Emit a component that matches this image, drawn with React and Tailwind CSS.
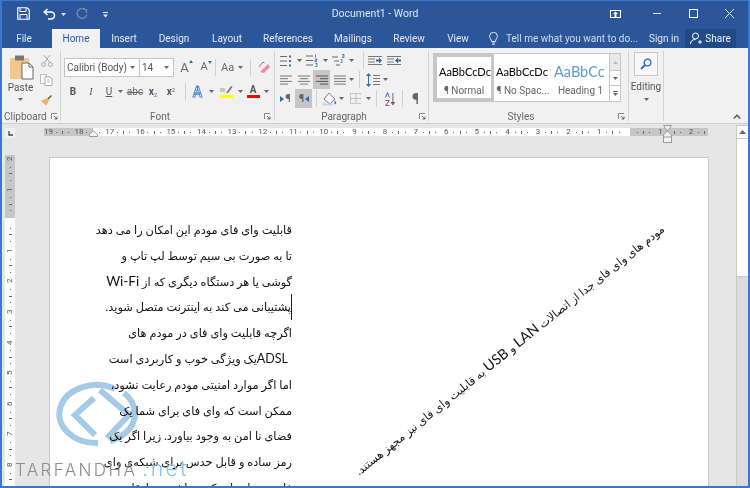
import React from 'react';

const Caret = ({ c = '#666' }) => (
  <svg width="5" height="3" viewBox="0 0 5 3" className="shrink-0"><path d="M0 0h5L2.5 3z" fill={c} /></svg>
);

const Slot = ({ w, children, sel }) => (
  <div style={{ width: w }} className={`h-full shrink-0 flex items-center justify-center ${sel ? 'bg-[#c6c6c6]' : ''}`}>{children}</div>
);

const VDiv = ({ h = 'h-[17px]' }) => <div className={`w-px ${h} bg-[#d0d0d0] shrink-0`} />;

const Launcher = () => (
  <svg width="7" height="7" viewBox="0 0 7 7" className="shrink-0">
    <path d="M0.5 6V0.5H6" stroke="#888" fill="none" />
    <path d="M3 3l3 3M6 3.5V6H3.5" stroke="#666" fill="none" />
  </svg>
);

const Lines = ({ kind }) => {
  const rows = {
    left: [[0, 12], [0, 8], [0, 12], [0, 8]],
    center: [[0, 12], [2, 10], [0, 12], [2, 10]],
    right: [[0, 12], [4, 12], [0, 12], [4, 12]],
    just: [[0, 12], [0, 12], [0, 12], [0, 12]],
  }[kind];
  return (
    <svg width="12" height="10" viewBox="0 0 12 10">
      {rows.map((r, i) => <path key={i} d={`M${r[0]} ${1 + i * 2.7}H${r[1]}`} stroke={kind === 'right' ? '#555' : '#777'} />)}
    </svg>
  );
};

const Bullets = () => (
  <svg width="12" height="12" viewBox="0 0 12 12">
    <path d="M0 1.5h7M0 6h7M0 10.5h7" stroke="#666" />
    <path d="M9 0.5h2v2H9zM9 5h2v2H9zM9 9.5h2v2H9z" fill="#2b6cb0" />
  </svg>
);
const Numbers = () => (
  <svg width="12" height="13" viewBox="0 0 12 13">
    <path d="M0 2h7M0 6.5h7M0 11h7" stroke="#666" />
    <path d="M9.5 0.5v3M9 5h2v1.2H9v1.4h2M9 9.6h2v3H9" stroke="#2b6cb0" fill="none" strokeWidth=".8" />
  </svg>
);
const Multi = () => (
  <svg width="13" height="13" viewBox="0 0 13 13">
    <path d="M0 3h6M2 7h5M4 11h4" stroke="#666" />
    <path d="M10 0.5h2v1.5h-1.5M12 2v1.5h-2M8.5 5.5h1.5v3H8.5" stroke="#2b6cb0" fill="none" strokeWidth=".8" />
  </svg>
);
const Indent = ({ rev }) => (
  <svg width="14" height="9" viewBox="0 0 14 9">
    <path d="M0 .5h14M0 8.5h14M0 3h7M0 6h7" stroke="#777" />
    <path d={rev ? 'M8 4.5L11 1.5V3.5H14V5.5H11V7.5z' : 'M14 4.5L11 1.5V3.5H8V5.5H11V7.5z'} fill="#2b6cb0" />
  </svg>
);

const Pages = ['19', '18', '17', '16', '15', '14', '13', '12', '11', '10', '9', '8', '7', '6', '5', '4', '3', '2', '1', '', '1', '2'];
const VNums = ['2', '1', '', '1', '2', '3', '4', '5', '6', '7', '8'];

const Lat = ({ s, children }) => <span className={s}>{children}</span>;

const TEXT_LINES = [
  'قابلیت وای فای مودم این امکان را می دهد',
  'تا به صورت بی سیم توسط لپ تاپ و',
  <>گوشی یا هر دستگاه دیگری که از <Lat s="text-[13.5px]">Wi-Fi</Lat></>,
  'پشتیبانی می کند به اینترنت متصل شوید.',
  'اگرچه قابلیت وای فای در مودم های',
  <><Lat s="text-[12.5px]">ADSL</Lat>یک ویژگی خوب و کاربردی است</>,
  'اما اگر موارد امنیتی مودم رعایت نشود،',
  'ممکن است که وای فای برای شما یک',
  'فضای نا امن به وجود بیاورد. زیرا اگر یک',
  'رمز ساده و قابل حدس برای شبکه‌ی وای',
  'فای خود انتخاب کرده باشید، سارقان',
];

export default function App() {
  return (
    <div className="relative w-[750px] h-[488px] overflow-hidden flex flex-col bg-[#e6e6e6] border-x-2 border-b-2 border-t border-[#3a78d0] font-['Roboto','Noto_Sans',sans-serif] text-[#444]">
      {/* Title bar */}
      <div className="h-[28px] shrink-0 bg-[#2b579a] flex items-center text-[#e3e9f3] relative">
        <div className="w-[15px]" />
        <svg width="13" height="13" viewBox="0 0 13 13" className="shrink-0 mt-[-3px]">
          <path d="M.75.75H10l2.25 2.25v9.25H.75z" stroke="#fff" strokeWidth="1.2" fill="none" />
          <path d="M3 1v3.5h6V1M3 12V7.5h7V12" stroke="#fff" fill="none" />
        </svg>
        <div className="w-[13px]" />
        <svg width="13" height="12" viewBox="0 0 13 12" className="shrink-0 mt-[-3px]">
          <path d="M4.5 1L1 4l3.5 3M1.5 4H8a3.5 3.5 0 0 1 0 7H5" stroke="#fff" strokeWidth="1.4" fill="none" />
        </svg>
        <div className="w-[5px]" />
        <div className="mt-[-2px]"><Caret c="#dfe6f2" /></div>
        <div className="w-[10px]" />
        <svg width="12" height="12" viewBox="0 0 12 12" className="shrink-0 mt-[-3px]">
          <path d="M7 1.5h3.5V5M10 2.2A5 5 0 1 0 11 6.5" stroke="#6d8dbd" strokeWidth="1.2" fill="none" />
        </svg>
        <div className="w-[15px]" />
        <svg width="5" height="6" viewBox="0 0 5 6" className="shrink-0 mt-[-1px]">
          <path d="M0 .5h5" stroke="#e3e9f3" /><path d="M0 2.5h5L2.5 5.5z" fill="#e3e9f3" />
        </svg>
        <div className="absolute left-0 right-0 top-[6px] text-center text-[10.5px] leading-[14px] text-[#dfe6f2]">Document1 - Word</div>
        <div className="flex-1" />
        <svg width="11" height="8" viewBox="0 0 11 8" className="shrink-0 mt-[-3px]">
          <rect x=".5" y=".5" width="10" height="7" fill="none" stroke="#fff" /><path d="M5.5 1.5L8 4H6.5v3h-2V4H3z" fill="#fff" />
        </svg>
        <div className="w-[32px]" />
        <div className="w-[8px] h-px bg-[#e3e9f3] mt-[-3px]" />
        <div className="w-[28px]" />
        <div className="w-[9px] h-[9px] border border-[#fff] mt-[-3px]" />
        <div className="w-[27px]" />
        <svg width="9" height="9" viewBox="0 0 9 9" className="mt-[-3px]"><path d="M0 0l9 9M9 0L0 9" stroke="#d8e0ee" /></svg>
        <div className="w-[14px]" />
      </div>

      {/* Tabs */}
      <div className="h-[19px] shrink-0 bg-[#2b579a] flex text-[10px] leading-[19px] text-[#e3e9f3]">
        <div className="w-[44px] text-center">File</div>
        <div className="w-[6px]" />
        <div className="w-[48px] text-center bg-[#f1f1f1] text-[#2b579a]">Home</div>
        <div className="w-[48px] text-center">Insert</div>
        <div className="w-[52px] text-center">Design</div>
        <div className="w-[54px] text-center">Layout</div>
        <div className="w-[68px] text-center">References</div>
        <div className="w-[62px] text-center">Mailings</div>
        <div className="w-[50px] text-center">Review</div>
        <div className="w-[48px] text-center">View</div>
        <div className="w-[7px]" />
        <svg width="9" height="13" viewBox="0 0 9 13" className="shrink-0 mt-[3px]">
          <path d="M2.5 9.5C2.5 7 .6 6.5.6 4.2a3.9 3.9 0 0 1 7.8 0C8.4 6.5 6.5 7 6.5 9.5zM3 11h3M3.5 12.5h2" stroke="#dfe6f2" fill="none" />
        </svg>
        <div className="w-[8px]" />
        <div className="w-[143px] text-[#d4dcea] whitespace-nowrap">Tell me what you want to do...</div>
        <div className="w-[36px] whitespace-nowrap">Sign in</div>
        <div className="w-[51px] bg-[#1f4a86] flex items-center justify-center gap-[3px] text-[#eef2f8]">
          <svg width="12" height="13" viewBox="0 0 12 13"><circle cx="5.5" cy="4" r="3" stroke="#fff" fill="none" /><path d="M.5 12c0-3 2-4.5 5-4.5M8 10h4M10 8v4" stroke="#fff" fill="none" /></svg>
          Share
        </div>
      </div>

      {/* Ribbon */}
      <div className="h-[76px] shrink-0 bg-[#f1f1f1] border-b border-[#cfcfcf] flex text-[10px]">
        {/* Clipboard */}
        <div className="w-[59px] shrink-0 flex flex-col relative border-r border-[#d4d4d4] mt-[3px] mb-[2px]">
          <div className="flex flex-1">
            <div className="w-[37px] flex flex-col items-center pt-[4px]">
              <svg width="24" height="25" viewBox="0 0 24 25" className="ml-[3px]">
                <rect x="0" y="3" width="19" height="21" rx="1" fill="#f0c98a" />
                <rect x="5" y="0.5" width="9" height="5" fill="#777" />
                <path d="M12 8h7l4 4v12H12z" fill="#fff" stroke="#666" />
                <path d="M19 8v4h4" fill="none" stroke="#666" />
              </svg>
              <div className="leading-[14px] mt-[1px] text-[#555]">Paste</div>
              <div className="mt-[3px]"><Caret /></div>
            </div>
            <div className="flex flex-col items-center gap-[7px] pt-[3px] w-[15px]">
              <svg width="12" height="13" viewBox="0 0 12 13"><path d="M3 1l6 8M9 1L3 9" stroke="#aaa" /><circle cx="2.5" cy="10.5" r="2" stroke="#aaa" fill="none" /><circle cx="9.5" cy="10.5" r="2" stroke="#aaa" fill="none" /></svg>
              <svg width="13" height="12" viewBox="0 0 13 12"><path d="M.5.5h6v9h-6z" stroke="#bbb" fill="#f8f8f8" /><path d="M5 3h5l2 2v6.500H5z" stroke="#aaa" fill="#fff" /><path d="M7 6h3M7 8h3" stroke="#bbb" /></svg>
              <svg width="13" height="13" viewBox="0 0 13 13"><path d="M7 6L11 2l1 1-4 4z" fill="#555" /><path d="M7 5l2 3-3 4.500L1 8z" fill="#e8b465" /></svg>
            </div>
          </div>
          <div className="h-[9px] flex items-center text-[#666] pl-[2px]">
            <span className="w-[47px]">Clipboard</span>
            <Launcher />
          </div>
        </div>

        {/* Font */}
        <div className="w-[214px] shrink-0 flex flex-col border-r border-[#d4d4d4] mt-[3px] mb-[2px]">
          <div className="flex-1">
            <div className="flex items-center h-[19px] mt-[7px] pl-[3px]">
              <div className="w-[76px] h-[19px] bg-white border border-[#c6c6c6] flex items-center justify-between pl-[2px] pr-[4px] text-[10px] text-[#555]">
                <span className="whitespace-nowrap">Calibri (Body)</span><Caret />
              </div>
              <div className="w-[34px] h-[19px] bg-white border border-l-0 border-[#c6c6c6] flex items-center justify-between pl-[2px] pr-[4px] text-[#555]">
                <span>14</span><Caret />
              </div>
              <Slot w="21px"><span className="text-[13px] text-[#666] relative">A<span className="absolute -right-[4px] top-[2px] w-0 h-0 border-x-[2.5px] border-b-[3px] border-x-transparent border-b-[#2b6cb0]" /></span></Slot>
              <Slot w="18px"><span className="text-[11px] text-[#666] relative">A<span className="absolute -right-[4px] top-[2px] w-0 h-0 border-x-[2.5px] border-t-[3px] border-x-transparent border-t-[#2b6cb0]" /></span></Slot>
              <div className="w-[2px]" />
              <VDiv />
              <div className="w-[5px]" />
              <span className="text-[11px] text-[#666] leading-none">Aa</span>
              <div className="w-[4px]" /><Caret />
              <div className="w-[7px]" />
              <VDiv />
              <div className="w-[6px]" />
              <svg width="13" height="13" viewBox="0 0 13 13"><path d="M2 6l4-5 1.500 1" stroke="#7a7a7a" fill="none" /><path d="M3 11L11 3l2 3-6 6z" fill="#ec8a9c" /></svg>
            </div>
            <div className="flex items-center h-[19px] mt-[5px] pl-[3px]">
              <Slot w="18px"><b className="text-[10px] text-[#555]">B</b></Slot>
              <Slot w="18px"><i className="text-[10px] text-[#555] font-['Liberation_Serif',serif]">I</i></Slot>
              <Slot w="18px"><span className="text-[10px] underline text-[#555]">U</span></Slot>
              <Caret />
              <Slot w="24px"><span className="text-[10px] line-through text-[#666]">abc</span></Slot>
              <Slot w="12px"><span className="text-[10px] font-bold text-[#555]">x<sub className="text-[6px] text-[#2b6cb0] font-normal">2</sub></span></Slot>
              <Slot w="24px"><span className="text-[10px] font-bold text-[#555]">x<sup className="text-[6px] text-[#2b6cb0] font-normal">2</sup></span></Slot>
              <div className="w-[2px]" />
              <VDiv />
              <Slot w="23px"><span className="text-[14px] font-bold text-[#cfe0f3] leading-none [-webkit-text-stroke:0.8px_#4d86c4]">A</span></Slot>
              <Caret />
              <Slot w="24px">
                <div className="flex flex-col items-center w-[13px]">
                  <svg width="13" height="9" viewBox="0 0 13 9"><path d="M6 8L11 1l1.500 1L8 8z" fill="#777" /><path d="M0 4h5M0 6h5" stroke="#999" /></svg>
                  <div className="w-[13px] h-[3px] bg-[#ffff00] mt-[1px]" />
                </div>
              </Slot>
              <Caret />
              <Slot w="20px">
                <div className="flex flex-col items-center w-[13px]">
                  <span className="text-[10px] leading-[10px] font-bold text-[#555]">A</span>
                  <div className="w-[13px] h-[3px] bg-[#ff0000]" />
                </div>
              </Slot>
              <div className="w-[1px]" />
              <Caret />
            </div>
          </div>
          <div className="h-[9px] flex items-center text-[#666] relative">
            <span className="w-[198px] text-center">Font</span>
            <div className="w-[5px]" /><Launcher />
          </div>
        </div>

        {/* Paragraph */}
        <div className="w-[154px] shrink-0 flex flex-col border-r border-[#d4d4d4] mt-[3px] mb-[2px]">
          <div className="flex-1">
            <div className="flex items-center h-[19px]">
              <Slot w="21px"><Bullets /></Slot>
              <Slot w="6px"><Caret /></Slot>
              <Slot w="20px"><Numbers /></Slot>
              <Slot w="6px"><Caret /></Slot>
              <Slot w="20px"><Multi /></Slot>
              <Slot w="6px"><Caret /></Slot>
              <div className="w-[9px]" />
              <VDiv />
              <div className="w-[4px]" />
              <Slot w="14px"><Indent /></Slot>
              <div className="w-[5px]" />
              <Slot w="14px"><Indent rev /></Slot>
            </div>
            <div className="flex items-center h-[19px]">
              <div className="w-[5px]" />
              <Slot w="12px"><Lines kind="left" /></Slot>
              <div className="w-[6px]" />
              <Slot w="12px"><Lines kind="center" /></Slot>
              <div className="w-[3px]" />
              <Slot w="17px" sel><Lines kind="right" /></Slot>
              <div className="w-[4px]" />
              <Slot w="12px"><Lines kind="just" /></Slot>
              <Slot w="10px"><Caret /></Slot>
              <div className="w-[3px]" />
              <VDiv />
              <div className="w-[6px]" />
              <svg width="14" height="14" viewBox="0 0 14 14"><path d="M2.500 1v12" stroke="#2b6cb0" /><path d="M0 3L2.500 0 5 3zM0 11l2.500 3L5 11z" fill="#2b6cb0" /><path d="M7 2.500h7M7 5.500h7M7 8.500h7M7 11.500h7" stroke="#777" /></svg>
              <Slot w="10px"><Caret /></Slot>
            </div>
            <div className="flex items-center h-[19px]">
              <div className="w-[6px]" />
              <Slot w="11px"><span className="text-[11px] font-bold text-[#666] relative pl-[3px] leading-none before:content-[''] before:absolute before:left-[-2px] before:top-[3px] before:border-y-[3px] before:border-l-[4px] before:border-y-transparent before:border-l-[#2b6cb0]">¶</span></Slot>
              <div className="w-[3px]" />
              <Slot w="17px" sel><span className="text-[11px] font-bold text-[#666] relative pr-[4px] leading-none after:content-[''] after:absolute after:right-[-1px] after:top-[3px] after:border-y-[3px] after:border-r-[4px] after:border-y-transparent after:border-r-[#2b6cb0]">¶</span></Slot>
              <div className="w-[4px]" />
              <VDiv />
              <div className="w-[6px]" />
              <svg width="14" height="14" viewBox="0 0 14 14"><path d="M1 7l5-6 6 6-5 5z" fill="#fff" stroke="#777" /><path d="M12 8c1 2 2 3 1 4s-2 0-1-4z" fill="#3a7bc0" /><path d="M0 12.500h10" stroke="#c8d4e3" strokeWidth="2" /></svg>
              <Slot w="10px"><Caret /></Slot>
              <div className="w-[3px]" />
              <svg width="12" height="11" viewBox="0 0 12 11"><path d="M.5.500h11v10H.5zM.5 5.500h11M6 .500v10" stroke="#999" strokeDasharray="1 1" fill="none" /></svg>
              <Slot w="14px"><Caret /></Slot>
              <div className="w-[1px]" />
              <VDiv />
              <div className="w-[8px]" />
              <svg width="11" height="14" viewBox="0 0 11 14"><path d="M.5 5.500L2.500.5l2 5" stroke="#2b6cb0" fill="none" /><path d="M.5 8.500h4l-4 5h4" stroke="#8a4ba8" fill="none" /><path d="M8 1v11" stroke="#666" /><path d="M5.500 10L8 13.500 10.500 10z" fill="#666" /></svg>
              <div className="w-[6px]" />
              <VDiv />
              <Slot w="25px"><span className="text-[14px] font-bold text-[#666] leading-none">¶</span></Slot>
            </div>
          </div>
          <div className="h-[9px] flex items-center text-[#666] relative">
            <span className="w-[138px] text-center">Paragraph</span>
            <div className="w-[6px]" /><Launcher />
          </div>
        </div>

        {/* Styles */}
        <div className="w-[200px] shrink-0 flex flex-col border-r border-[#d4d4d4] mt-[3px] mb-[2px]">
          <div className="flex-1 pl-[4px] pt-[2px]">
            <div className="h-[49px] w-[188px] border border-[#c6c6c6] bg-white flex">
              <div className="w-[60px] shrink-0 border-[3px] border-[#c6c6c6] flex flex-col items-center overflow-hidden pt-[2px]">
                <div className="h-[26px] w-full pl-[2px] flex items-center text-[11px] text-black whitespace-nowrap overflow-hidden font-['Lato',sans-serif]">AaBbCcDc</div>
                <div className="text-[10px] text-[#666] leading-[12px]">¶ Normal</div>
              </div>
              <div className="w-[58px] shrink-0 flex flex-col items-center overflow-hidden pt-[5px]">
                <div className="h-[26px] w-full pl-[2px] flex items-center text-[11px] text-black whitespace-nowrap overflow-hidden font-['Lato',sans-serif]">AaBbCcDc</div>
                <div className="text-[10px] text-[#666] leading-[12px] whitespace-nowrap">¶ No Spac...</div>
              </div>
              <div className="w-[57px] shrink-0 flex flex-col items-center overflow-hidden pt-[5px]">
                <div className="h-[26px] w-full pl-[2px] flex items-center text-[14.5px] text-[#5b9bd5] whitespace-nowrap overflow-hidden font-['Lato',sans-serif]">AaBbCc</div>
                <div className="text-[10px] text-[#666] leading-[12px] whitespace-nowrap">Heading 1</div>
              </div>
              <div className="w-[11px] shrink-0 border-l border-[#c6c6c6] flex flex-col">
                <div className="h-[16px] bg-[#e9e9e9] flex items-center justify-center"><svg width="5" height="3" viewBox="0 0 5 3"><path d="M2.500 0L5 3H0z" fill="#bbb" /></svg></div>
                <div className="h-[16px] border-y border-[#c6c6c6] flex items-center justify-center"><Caret /></div>
                <div className="flex-1 flex flex-col items-center justify-center gap-[1px]"><div className="w-[5px] h-px bg-[#666]" /><Caret /></div>
              </div>
            </div>
          </div>
          <div className="h-[9px] flex items-center text-[#666] relative">
            <span className="w-[184px] text-center">Styles</span>
            <div className="w-[5px]" /><Launcher />
          </div>
        </div>

        {/* Editing */}
        <div className="w-[35px] shrink-0 flex flex-col items-center border-r border-[#d4d4d4] mt-[3px] mb-[2px] pt-[1px]">
          <div className="w-[24px] h-[24px] border border-[#c6c6c6] bg-[#f8f8f8] flex items-center justify-center">
            <svg width="12" height="12" viewBox="0 0 12 12"><circle cx="7.500" cy="4.500" r="3.300" stroke="#2f6db0" strokeWidth="1.300" fill="none" /><path d="M5 7L1 11" stroke="#2f6db0" strokeWidth="1.800" /></svg>
          </div>
          <div className="leading-[14px] mt-[4px] text-[#555]">Editing</div>
          <div className="mt-[4px]"><Caret /></div>
        </div>

        <div className="flex-1 flex items-end justify-end pr-[7px] pb-[4px]">
          <svg width="8" height="5" viewBox="0 0 8 5"><path d="M.7 4.500L4 1.200 7.300 4.500" stroke="#555" strokeWidth="1.300" fill="none" /></svg>
        </div>
      </div>

      {/* Workspace */}
      <div className="flex-1 min-h-0 flex">
        <div className="flex-1 min-w-0 flex flex-col pt-[4px]">
          <div className="h-[8px] shrink-0 flex items-start relative">
            <div className="ml-[3px] w-[10px] h-[10px] bg-[#f2f2f2] flex items-center justify-center shrink-0">
              <svg width="5" height="5" viewBox="0 0 5 5"><path d="M1 0v4h4" stroke="#444" strokeWidth="1.300" fill="none" /></svg>
            </div>
            <div className="ml-[29px] w-[664px] h-[8px] shrink-0 flex overflow-hidden bg-[linear-gradient(90deg,#c6c6c6_49px,#fff_49px,#fff_586px,#c6c6c6_586px)]">
              {Pages.map((n, i) => (
                <div key={i} className="w-[30.6px] shrink-0 h-full flex items-center text-[8px] leading-[8px] text-[#555]">
                  <span className="w-[9px] text-center shrink-0">{n}</span>
                  <div className="flex-1 flex items-center justify-around pr-[3px]">
                    <span className="w-px h-px bg-[#666]" />
                    <span className="w-px h-[3px] bg-[#666]" />
                    <span className="w-px h-px bg-[#666]" />
                  </div>
                </div>
              ))}
            </div>
            <svg width="9" height="7" viewBox="0 0 9 7" className="absolute left-[87px] top-[2px]"><path d="M4.500.5L8.500 4.500V6.500H.5V4.500z" fill="#f4f4f4" stroke="#999" /></svg>
            <svg width="9" height="18" viewBox="0 0 9 18" className="absolute left-[661px] top-[-3px]">
              <path d="M.5.5h8L4.500 6zM4.500 6L.5 10v3h8v-3z" fill="#f4f4f4" stroke="#999" />
              <rect x=".5" y="12" width="8" height="5.500" fill="#f4f4f4" stroke="#999" />
            </svg>
          </div>
          <div className="flex-1 min-h-0 flex items-start mt-[19px]">
            <div className="ml-[3px] w-[10px] shrink-0 h-[340px] overflow-hidden flex flex-col bg-[linear-gradient(180deg,#c6c6c6_63px,#fff_63px)]">
              {VNums.map((n, i) => (
                <div key={i} className="h-[30.6px] shrink-0 w-full flex flex-col items-center text-[8px] leading-[8px] text-[#555]">
                  <span className="h-[7px] flex items-center justify-center [writing-mode:vertical-rl] rotate-180">{n}</span>
                  <div className="flex-1 flex flex-col items-center justify-around py-[2px]">
                    <span className="w-px h-px bg-[#666]" />
                    <span className="h-px w-[3px] bg-[#666]" />
                    <span className="w-px h-px bg-[#666]" />
                  </div>
                </div>
              ))}
            </div>
            <div className="ml-[34px] mt-[2px] w-[660px] shrink-0 h-[340px] relative bg-white border border-b-0 border-[#c8c8c8] overflow-hidden font-['Lato','DejaVu_Sans',sans-serif] text-[#111]">
              <div className="ml-[42px] mt-[59px] w-[200px] flex flex-col items-end" dir="rtl">
                {TEXT_LINES.map((t, i) => (
                  <div key={i} className={`h-[25.8px] leading-[25.8px] text-[11.35px] whitespace-nowrap w-full text-right ${i === 3 ? 'border-r border-[#222]' : ''} ${i === 5 ? 'pr-[4px]' : ''}`}>
                    {t}
                  </div>
                ))}
              </div>
              <div dir="rtl" className="absolute left-[262px] top-[181px] w-[395px] text-center whitespace-nowrap text-[11.4px] leading-[20px] -rotate-[38.7deg]">
                مودم های وای فای جدا از اتصالات <span className="text-[14.3px]">LAN</span> و <span className="text-[14.3px]">USB</span> به قابلیت وای فای نیز مجهز هستند.
              </div>
            </div>
          </div>
        </div>

        {/* Scrollbar */}
        <div className="w-[12px] shrink-0 mt-[1px] flex flex-col border-l border-t border-[#c8c8c8] bg-[#dbdbdb]">
          <div className="h-[13px] bg-white border-b border-[#c8c8c8] flex items-center justify-center">
            <svg width="7" height="4" viewBox="0 0 7 4"><path d="M3.500 0L7 4H0z" fill="#666" /></svg>
          </div>
          <div className="h-[138px] bg-white border-b border-[#c8c8c8]" />
        </div>
      </div>

      {/* Watermark */}
      <svg width="120" height="100" viewBox="0 0 120 100" className="absolute left-[38px] top-[371px] pointer-events-none mix-blend-multiply">
        <g transform="translate(-38,-372)" fill="none" stroke="#a3cbe6" strokeWidth="6">
          <path d="M113 389 A37 29 0 1 0 96 443" />
          <path d="M122 393 A37 29 0 0 1 108 441" />
          <path d="M92 398 L73 415 L93 435" />
          <path d="M98 390 L127 415 L105 438" />
        </g>
      </svg>
      <div className="absolute left-[13px] top-[457px] flex items-baseline pointer-events-none whitespace-nowrap font-['Inter',sans-serif] text-[17px] leading-[22px] font-light">
        <span className="text-[#8d8d8d] tracking-[2.4px]">TARFANDHA</span>
        <span className="text-[#8fc1e2] ml-[5px] text-[21px] tracking-[2.5px]">.net</span>
      </div>
    </div>
  );
}
